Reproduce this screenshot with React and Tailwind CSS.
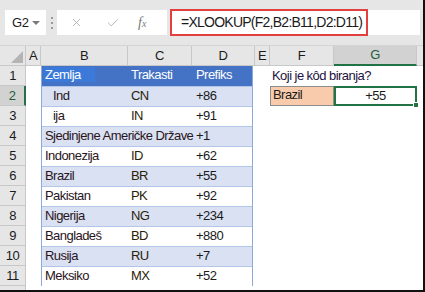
import React from 'react';
import { X, Check } from 'lucide-react';

const rows = [
  { b: 'Ind', c: 'CN', d: '+86', indent: true },
  { b: 'ija', c: 'IN', d: '+91', indent: true },
  { b: 'Sjedinjene Američke Države', c: '', d: '+1' },
  { b: 'Indonezija', c: 'ID', d: '+62' },
  { b: 'Brazil', c: 'BR', d: '+55' },
  { b: 'Pakistan', c: 'PK', d: '+92' },
  { b: 'Nigerija', c: 'NG', d: '+234' },
  { b: 'Bangladeš', c: 'BD', d: '+880' },
  { b: 'Rusija', c: 'RU', d: '+7' },
  { b: 'Meksiko', c: 'MX', d: '+52' },
];

const cols = ['A', 'B', 'C', 'D', 'E', 'F', 'G'];

function App() {
  return (
    <div className="w-[425px] h-[292px] bg-[#e6e6e6] border-r-2 border-b-2 border-[#111] overflow-hidden flex flex-col font-['Liberation_Sans',Arial,sans-serif] text-[#1b1b1b]">
      {/* formula bar */}
      <div className="h-[46px] flex items-center pl-[5px] pr-[3px] border-b border-[#d4d4d4]">
        <div className="w-[41px] h-[25px] bg-white flex items-center justify-between pl-[7px] pr-[6px]">
          <span className="text-[13px] tracking-[-0.3px]">G2</span>
          <span className="w-0 h-0 border-l-[4px] border-r-[4px] border-t-[4px] border-l-transparent border-r-transparent border-t-[#7a7a7a]" />
        </div>
        <div className="w-[11px] flex flex-col items-center gap-[3px]">
          <span className="w-[2px] h-[2px] bg-[#9a9a9a]" />
          <span className="w-[2px] h-[2px] bg-[#9a9a9a]" />
          <span className="w-[2px] h-[2px] bg-[#9a9a9a]" />
        </div>
        <div className="w-[110px] h-[25px] bg-white flex items-center">
          <X className="w-[13px] h-[13px] ml-[13px] text-[#b0b0b0]" strokeWidth={1.6} />
          <Check className="w-[14px] h-[14px] ml-[23px] text-[#b0b0b0]" strokeWidth={1.6} />
          <span className="ml-[18px] font-['Liberation_Serif',serif] italic text-[14px] text-[#7a7a7a]">
            f<span className="text-[10px]">x</span>
          </span>
        </div>
        <div className="ml-[3px] flex-1 h-[25px] bg-white flex items-center">
          <div className="w-[198px] h-[27px] border-2 border-[#e2403e] flex items-center pl-[9px] text-[14px] tracking-[-0.75px] text-[#1a1a1a]">
            =XLOOKUP(F2,B2:B11,D2:D11)
          </div>
        </div>
      </div>

      {/* sheet */}
      <div className="flex-1 bg-white grid grid-cols-[26px_15px_87px_64px_63px_15px_64px_83px_1fr] grid-rows-[20px_repeat(11,20px)_1fr] text-[13px] tracking-[-0.55px]">
        {/* column headers */}
        <div className="bg-[#e6e6e6] border-r border-b border-[#c8c8c8] relative">
          <svg className="absolute right-[2px] bottom-[2px]" width="12" height="12" viewBox="0 0 12 12">
            <polygon points="12,0 12,12 0,12" fill="#b4b4b4" />
          </svg>
        </div>
        {cols.map((c) =>
          c === 'G' ? (
            <div key={c} className="bg-[#d2d2d2] border-r border-[#c8c8c8] border-b-2 border-b-[#217346] flex items-center justify-center text-[#1f5c3a]">
              {c}
            </div>
          ) : (
            <div key={c} className="bg-[#e6e6e6] border-r border-b border-[#c8c8c8] flex items-center justify-center">
              {c}
            </div>
          )
        )}
        <div className="bg-[#e6e6e6] border-b border-[#c8c8c8]" />

        {/* row headers */}
        {Array.from({ length: 11 }, (_, i) => i + 1).map((n) => (
          <div
            key={n}
            style={{ gridRowStart: n + 1 }}
            className={
              n === 2
                ? 'col-start-1 bg-[#d2d2d2] border-r-2 border-r-[#217346] border-b border-b-[#c8c8c8] flex items-center justify-center text-[#1f5c3a]'
                : 'col-start-1 bg-[#e6e6e6] border-r border-b border-[#c8c8c8] flex items-center justify-center'
            }
          >
            {n}
          </div>
        ))}
        <div className="col-start-1 row-start-13 bg-[#e6e6e6] border-r border-[#c8c8c8]" />

        {/* table */}
        <div className="col-start-3 col-span-3 row-start-2 row-span-11 w-[212px] flex flex-col border-l border-r border-b border-[#8ea9db]">
          <div className="h-[20px] bg-[#4472c4] text-white flex items-end pb-[2px]">
            <div className="w-[87px] pl-[2px]">
              <span className="bg-[#3b7ad8] pl-[1px] pr-[14px]">Zemlja</span>
            </div>
            <div className="w-[64px] pl-[2px]">Trakasti</div>
            <div className="flex-1 pl-[3px]">Prefiks</div>
          </div>
          {rows.map((r, i) => (
            <div
              key={i}
              className={
                (i % 2 === 0 ? 'bg-[#d9e1f2]' : 'bg-white') +
                ' h-[20px] flex items-end pb-[1px] border-t border-[#b4c6e7]'
              }
            >
              <div className={(r.indent ? 'pl-[11px] ' : 'pl-[3px] ') + 'w-[87px] whitespace-nowrap text-[#2a1420]'}>
                {r.b}
              </div>
              <div className="w-[64px] pl-[2px] text-[#2b2208]">{r.c}</div>
              <div className="flex-1 pl-[3px]">{r.d}</div>
            </div>
          ))}
        </div>

        {/* F1 / F2 / G2 */}
        <div className="col-start-7 row-start-2 flex items-end pl-[2px] pb-[1px] whitespace-nowrap text-[#1e1240]">
          Koji je kôd biranja?
        </div>
        <div className="col-start-7 row-start-3 bg-[#f8cbad] border border-[#8c8c8c] flex items-end pl-[2px] pb-[1px]">
          Brazil
        </div>
        <div className="col-start-8 row-start-3 border-2 border-[#217346] relative flex items-center justify-center">
          +55
          <span className="absolute -right-[4px] -bottom-[4px] w-[6px] h-[6px] bg-[#217346] border border-white" />
        </div>
      </div>
    </div>
  );
}

export default App;
